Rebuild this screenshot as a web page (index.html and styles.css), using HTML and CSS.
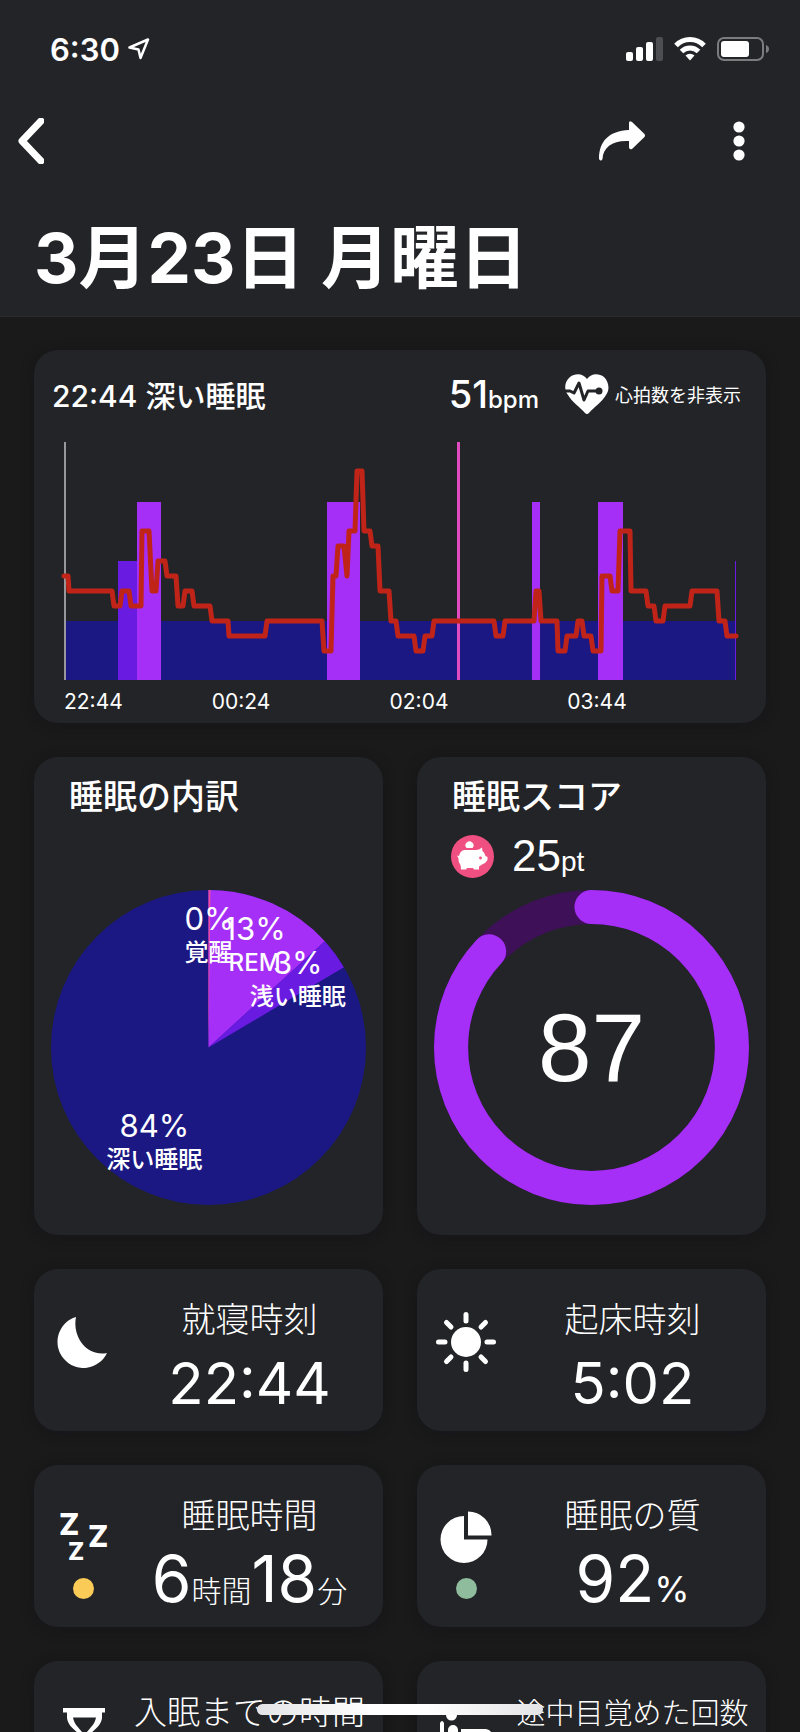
FILE: index.html
```html
<!DOCTYPE html>
<html lang="ja">
<head>
    <meta charset="UTF-8">
    <meta name="viewport" content="width=device-width, initial-scale=1.0">
    <title>3月23日 月曜日</title>
    <link rel="stylesheet" href="styles.css">
</head>
<body>
    <header class="header">
        <div class="status-bar">
            <div class="status-left">
                <span class="clock">6:30</span>
                <svg class="location" viewBox="0 0 22 22"><path d="M1.500 9.500 L20 1.500 L12.500 20 L10.500 11.500 Z"/></svg>
            </div>
            <div class="status-right">
                <svg class="signal" viewBox="0 0 37 24">
                    <rect x="0" y="15" width="7" height="9" rx="2"/>
                    <rect x="10" y="10" width="7" height="14" rx="2"/>
                    <rect x="20" y="5" width="7" height="19" rx="2"/>
                    <rect class="dim" x="30" y="0" width="7" height="24" rx="2"/>
                </svg>
                <svg class="wifi" viewBox="0 0 32 24">
                    <path class="arc" d="M2 8.500 A19.500 19.500 0 0 1 30 8.500"/>
                    <path class="arc" d="M7.500 14.500 A12 12 0 0 1 24.500 14.500"/>
                    <path d="M11.500 18.600 A6.500 6.500 0 0 1 20.500 18.600 L16 23.500 Z"/>
                </svg>
                <svg class="battery" viewBox="0 0 53 24">
                    <rect class="case" x="1" y="1" width="45" height="22" rx="6"/>
                    <rect x="4" y="4" width="28" height="16" rx="3"/>
                    <path class="tip" d="M49 8 Q52 9 52 12 Q52 15 49 16 Z"/>
                </svg>
            </div>
        </div>
        <nav class="toolbar">
            <button class="icon-button" aria-label="戻る">
                <svg class="back" viewBox="0 0 26 46"><path d="M23 3 L4 23 L23 43"/></svg>
            </button>
            <div class="actions">
                <button class="icon-button" aria-label="共有">
                    <svg class="share" viewBox="0 0 46 40"><path d="M0 38 C0 20 10 10 30 9 V2 Q30 -1 33 1 L45.500 13 Q46.500 14.500 45.500 16 L33 28 Q30 29 30 26 V20 C14 19 4 26 3.500 38 Q2 41 0 38 Z"/></svg>
                </button>
                <button class="icon-button" aria-label="メニュー">
                    <svg class="more" viewBox="0 0 12 40"><circle cx="6" cy="6" r="5.600"/><circle cx="6" cy="20" r="5.600"/><circle cx="6" cy="34" r="5.600"/></svg>
                </button>
            </div>
        </nav>
        <h1>3月23日 月曜日</h1>
    </header>

    <main class="content">
        <section class="card chart-card">
            <div class="chart-head">
                <h2>22:44 深い睡眠</h2>
                <p class="bpm">51<small>bpm</small></p>
                <button class="heart-toggle">
                    <svg class="heart" viewBox="0 0 44 40">
                        <path d="M22 5 C18 -1 10 -1 5 3 C-1 8 -1 16 3 21 C7 28 15 33 20 39 Q22 41 24 39 C29 33 37 28 41 21 C45 16 44 8 39 3 C34 -1 26 -1 22 5 Z"/>
                        <path class="pulse" d="M0 17 H5 L9 19 L14 9 L19 26 L23 17 H33"/>
                        <circle class="pulse-dot" cx="34" cy="17" r="3.500"/>
                    </svg>
                    <span>心拍数を非表示</span>
                </button>
            </div>
            <svg class="sleep-chart" viewBox="0 0 680 272">
                <!-- sleep stages -->
                <rect class="deep" x="5" y="179" width="670" height="59"/>
                <rect class="light" x="58" y="119" width="19" height="119"/>
                <rect class="rem" x="77" y="60" width="24" height="178"/>
                <rect class="rem" x="267" y="60" width="33" height="178"/>
                <rect class="rem" x="472" y="60" width="8" height="178"/>
                <rect class="rem" x="538" y="60" width="25" height="178"/>
                <rect class="light" x="675" y="119" width="1" height="119"/>
                <rect class="awake" x="397" y="0" width="3" height="238"/>
                <rect class="cursor" x="4" y="0" width="2" height="238"/>
                <!-- heart rate -->
                <polyline class="pulse-line" points="4,134 8,134 9,149 52,149 54,164 60,164 62,149 69,149 71,164 81,164 82,89 89,89 92,149 96,149 98,119 105,119 107,134 116,134 118,164 123,164 125,149 132,149 134,164 150,164 152,179 168,179 169,194 205,194 207,179 262,179 264,209 271,209 273,134 276,134 278,104 284,104 287,134 289,89 295,89 297,29 302,29 304,89 310,89 312,104 318,104 320,149 329,149 331,179 336,179 338,194 354,194 356,209 363,209 365,194 372,194 374,179 434,179 436,194 443,194 445,179 474,179 476,149 479,149 481,179 497,179 498,209 505,209 507,194 516,194 518,179 522,179 524,194 531,194 533,209 541,209 542,134 550,134 552,149 558,149 560,89 570,89 571,149 586,149 588,164 594,164 596,179 603,179 605,164 630,164 632,149 657,149 659,179 665,179 667,194 676,194"/>
                <text class="tick first" x="4" y="267">22:44</text>
                <text class="tick" x="181" y="267">00:24</text>
                <text class="tick" x="359" y="267">02:04</text>
                <text class="tick" x="537" y="267">03:44</text>
            </svg>
        </section>

        <div class="grid">
            <section class="card figure-card">
                <h2>睡眠の内訳</h2>
                <svg class="figure" viewBox="0 0 314 314">
                    <circle class="deep" cx="157" cy="157" r="157"/>
                    <path class="rem" d="M157 157 V0 A157 157 0 0 1 273 51 Z"/>
                    <path class="light" d="M157 157 L273 51 A157 157 0 0 1 292 77 Z"/>
                    <path class="sliver" d="M157 157 V0 H159 Z"/>
                    <text class="percent" x="158" y="40">0%</text>
                    <text class="stage" x="157" y="71">覚醒</text>
                    <text class="percent" x="203" y="50">13%</text>
                    <text class="stage" x="203" y="81">REM</text>
                    <text class="percent" x="246" y="84">3%</text>
                    <text class="stage" x="246" y="115">浅い睡眠</text>
                    <text class="percent" x="103" y="246">84%</text>
                    <text class="stage" x="103" y="277">深い睡眠</text>
                </svg>
            </section>
            <section class="card figure-card">
                <h2>睡眠スコア</h2>
                <p class="points">
                    <svg class="piggy" viewBox="0 0 43 43">
                        <circle class="coin-bg" cx="21.500" cy="21.500" r="21.500"/>
                        <path d="M15.500 13 A4 4 0 1 1 21.500 13 Z"/>
                        <path d="M6 20.500 L8 21 Q9 16 13 15 H25 L28 14.500 L31 12.500 L31.500 16 Q34 18 34.500 21 L36.500 22 V25 Q35 28 31 29.500 L28 31.500 V34.500 H23 L22 33 H16 L15 34.500 H10 L9.500 30 Q7 27 7.500 23.500 Z"/>
                        <circle class="coin-bg" cx="29.500" cy="23" r="1.400"/>
                    </svg>
                    <span>25<small>pt</small></span>
                </p>
                <svg class="figure" viewBox="0 0 314 314">
                    <circle class="ring-track" cx="157" cy="157" r="140"/>
                    <circle class="ring" cx="157" cy="157" r="140" pathLength="100" transform="rotate(-90 157 157)"/>
                    <text class="score" x="157" y="190">87</text>
                </svg>
            </section>

            <section class="card stat">
                <div class="stat-icon">
                    <svg viewBox="0 0 60 60"><path d="M23 5 C19 25 34 45 54 41 A26 26 0 1 1 23 5 Z"/></svg>
                </div>
                <div class="stat-text">
                    <h3>就寝時刻</h3>
                    <p>22:44</p>
                </div>
            </section>
            <section class="card stat">
                <div class="stat-icon">
                    <svg viewBox="0 0 60 60">
                        <circle cx="30" cy="30" r="15"/>
                        <path class="rays" d="M30 2.500 V9 M30 51 V57.500 M2.500 30 H9 M51 30 H57.500 M10.500 10.500 L15 15 M45 45 L49.500 49.500 M10.500 49.500 L15 45 M45 15 L49.500 10.500"/>
                    </svg>
                </div>
                <div class="stat-text">
                    <h3>起床時刻</h3>
                    <p>5:02</p>
                </div>
            </section>

            <section class="card stat">
                <div class="stat-icon">
                    <svg class="zzz" viewBox="0 0 60 60">
                        <text class="z-big" x="6" y="27">Z</text>
                        <text class="z-big" x="35" y="39">Z</text>
                        <text class="z-small" x="15" y="52">Z</text>
                    </svg>
                    <span class="dot yellow"></span>
                </div>
                <div class="stat-text">
                    <h3>睡眠時間</h3>
                    <p class="large">6<small>時間</small>18<small>分</small></p>
                </div>
            </section>
            <section class="card stat">
                <div class="stat-icon">
                    <svg viewBox="0 0 60 60"><path d="M28 8 A23.500 23.500 0 1 0 51.500 31.500 H28 Z M32 3.500 A23.500 23.500 0 0 1 55.500 27.500 H32 Z"/></svg>
                    <span class="dot green"></span>
                </div>
                <div class="stat-text">
                    <h3>睡眠の質</h3>
                    <p class="large">92<small class="unit">%</small></p>
                </div>
            </section>

            <section class="card stat">
                <div class="stat-icon">
                    <svg viewBox="0 0 60 60"><path d="M10 4 H52 V8.500 H49 V14 C48 22 41 26 36 31 C41 36 48 39 49 47 V52 H52 V56 H10 V52 H14 V47 C15 39 22 36 27 31 C22 26 15 22 14 14 V8.500 H10 Z M20 13.500 C21 20 26 24 29 28 H34 C37 24 42 20 43 13.500 Z"/></svg>
                </div>
                <div class="stat-text">
                    <h3 class="medium">入眠までの時間</h3>
                </div>
            </section>
            <section class="card stat">
                <div class="stat-icon">
                    <svg viewBox="0 0 60 60">
                        <circle cx="15.500" cy="11" r="5.500"/>
                        <path d="M4 19 Q6 15 8 19 V54 H4 Z M12 26 A5 5 0 0 1 22 26 V40 H12 Z M25 25 H50 Q56 26 56 32 V54 H52 V44 H25 Z"/>
                    </svg>
                </div>
                <div class="stat-text">
                    <h3 class="small">途中目覚めた回数</h3>
                </div>
            </section>
        </div>
    </main>
    <div class="home-indicator"></div>
</body>
</html>
```
FILE: styles.css
```css
* {
    margin: 0;
    padding: 0;
    box-sizing: border-box;
}

body {
    height: 100vh;
    overflow: hidden;
    background: #1a1a1a;
    color: #fff;
    font-family: Inter, "Noto Sans CJK JP", sans-serif;
}

svg {
    display: block;
    fill: #fff;
}

button {
    background: none;
    border: none;
    color: inherit;
    font: inherit;
    cursor: pointer;
}

.header {
    height: 317px;
    background: #232428;
    border-bottom: 1px solid #2a2b2e;
}

.status-bar {
    display: flex;
    justify-content: space-between;
    align-items: center;
    height: 98px;
    padding: 0 30px 0 50px;
}

.status-left,
.status-right {
    display: flex;
    align-items: center;
}

.status-left {
    gap: 8px;
}

.status-right {
    gap: 11px;
}

.clock {
    font-size: 31px;
    font-weight: 600;
}

.location {
    width: 22px;
    fill: none;
    stroke: #fff;
    stroke-width: 2.5;
    stroke-linejoin: round;
}

.signal {
    width: 37px;
}

.dim {
    fill: #4d4e51;
}

.wifi {
    width: 32px;
}

.wifi .arc {
    fill: none;
    stroke: #fff;
    stroke-width: 5;
}

.battery {
    width: 53px;
}

.battery .case {
    fill: none;
    stroke: #7b7c7e;
    stroke-width: 2;
}

.battery .tip {
    fill: #7b7c7e;
}

.toolbar {
    display: flex;
    justify-content: space-between;
    align-items: center;
    height: 85px;
    padding: 0 55px 0 18px;
}

.actions {
    display: flex;
    align-items: center;
    gap: 88px;
}

.back {
    width: 26px;
    fill: none;
    stroke: #fff;
    stroke-width: 7;
    stroke-linecap: round;
    stroke-linejoin: round;
}

.share {
    width: 46px;
}

.more {
    width: 12px;
}

h1 {
    padding: 25px 34px 0;
    font-size: 69px;
    font-weight: 700;
    line-height: 100px;
}

.content {
    padding: 33px 34px;
}

.card {
    background: #232428;
    border-radius: 24px;
    box-shadow: 0 2px 12px rgba(20, 16, 24, 0.6);
}

.chart-card {
    margin-bottom: 34px;
    padding: 16px 26px 9px;
}

.chart-head {
    display: flex;
    align-items: center;
    height: 56px;
    margin: 0 -1px 20px -8px;
}

.chart-head h2 {
    flex: 1;
    font-size: 30px;
    font-weight: 500;
}

.bpm {
    font-size: 38px;
    font-weight: 500;
}

.bpm small {
    font-size: 24px;
}

.heart-toggle {
    display: flex;
    align-items: center;
    gap: 6px;
    margin-left: 26px;
    font-size: 18px;
    font-weight: 400;
}

.heart {
    width: 44px;
}

.pulse {
    fill: none;
    stroke: #232428;
    stroke-width: 3;
    stroke-linejoin: round;
}

.pulse-dot {
    fill: #232428;
}

.sleep-chart,
.figure {
    width: 100%;
}

.deep {
    fill: #1b1883;
}

.light {
    fill: #6a1be1;
}

.rem {
    fill: #a52ff7;
}

.awake {
    fill: #e04cc0;
}

.sliver {
    fill: #e84da0;
}

.cursor {
    fill: #98989c;
}

.pulse-line {
    fill: none;
    stroke: #c02418;
    stroke-width: 5;
    stroke-linecap: round;
    stroke-linejoin: round;
}

.tick {
    font-size: 21px;
    text-anchor: middle;
}

.tick.first {
    text-anchor: start;
}

.grid {
    display: grid;
    grid-template-columns: repeat(2, minmax(0, 1fr));
    gap: 34px;
}

.figure-card {
    display: flex;
    flex-direction: column;
    padding: 15px 17px 30px;
}

.figure-card h2 {
    padding: 0 18px;
    font-size: 34px;
    font-weight: 500;
    line-height: 50px;
}

.figure-card .figure {
    margin-top: auto;
}

.points {
    display: flex;
    align-items: center;
    gap: 18px;
    height: 68px;
    padding: 0 17px;
    font: 44px "Liberation Sans", sans-serif;
}

.points small {
    font-size: 28px;
}

.piggy {
    width: 43px;
}

.coin-bg {
    fill: #ef5081;
}

.percent,
.stage,
.score {
    text-anchor: middle;
}

.percent {
    font-size: 31px;
}

.stage {
    font-size: 24px;
    font-weight: 500;
}

.score {
    font: 96px "Liberation Sans", sans-serif;
}

.ring-track,
.ring {
    fill: none;
    stroke-width: 34;
}

.ring-track {
    stroke: #3e1058;
}

.ring {
    stroke: #a52ff7;
    stroke-linecap: round;
    stroke-dasharray: 87 100;
}

.stat {
    display: grid;
    grid-template-columns: 98px minmax(0, 1fr);
    height: 162px;
    padding-right: 16px;
}

.stat-icon {
    display: flex;
    flex-direction: column;
    align-items: center;
    gap: 10px;
    padding-top: 43px;
}

.stat-icon svg {
    width: 60px;
}

.rays {
    stroke: #fff;
    stroke-width: 5;
    stroke-linecap: round;
}

.zzz {
    font-weight: 800;
}

.z-big {
    font-size: 30px;
}

.z-small {
    font-size: 24px;
}

.dot {
    width: 21px;
    height: 21px;
    border-radius: 50%;
}

.yellow {
    background: #facb56;
}

.green {
    background: #8fbc9d;
}

.stat-text {
    display: flex;
    flex-direction: column;
    align-items: center;
    padding-top: 26px;
    white-space: nowrap;
}

.stat-text h3 {
    font-size: 34px;
    font-weight: 300;
    line-height: 50px;
}

.stat-text .medium {
    font-size: 33px;
}

.stat-text .small {
    font-size: 29px;
    line-height: 54px;
}

.stat-text p {
    font-size: 58px;
    line-height: 76px;
}

.stat-text .large {
    font-size: 64px;
}

.stat-text small {
    font-size: 30px;
    font-weight: 300;
}

.stat-text .unit {
    font-size: 36px;
    font-weight: 400;
}

.home-indicator {
    position: fixed;
    bottom: 17px;
    left: 50%;
    width: 286px;
    height: 11px;
    margin-left: -143px;
    border-radius: 6px;
    background: linear-gradient(90deg, #e4e4e6, #fff 40%, #fff 60%, #e4e4e6);
}
```
